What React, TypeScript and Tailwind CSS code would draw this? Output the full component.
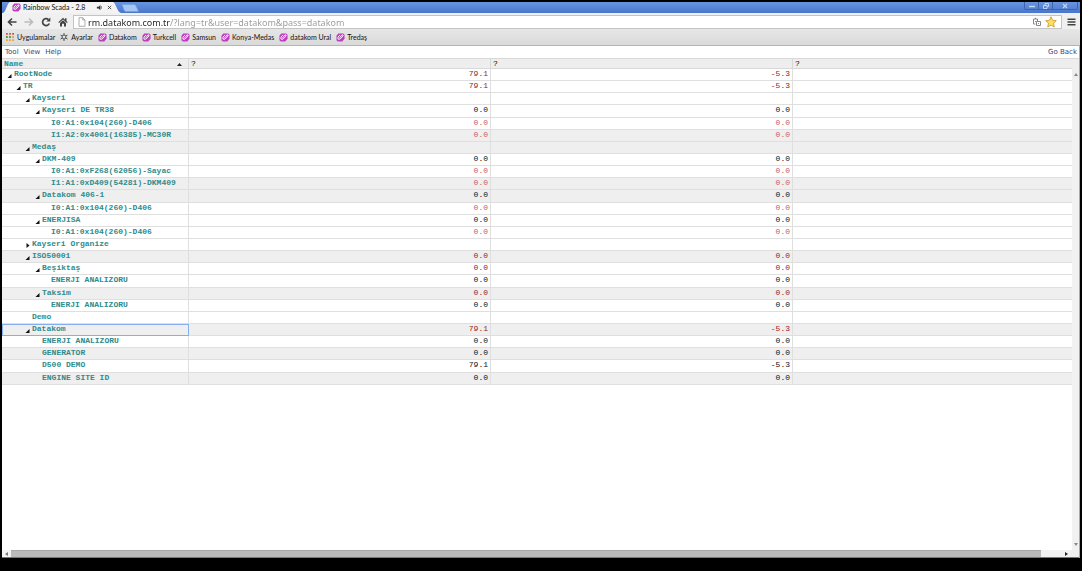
import clsx from "clsx";

type Tone = "dark" | "light" | "plain";

type Row = {
  name: string;
  level: number;
  state?: "open" | "closed";
  values?: [string, string];
  tone?: Tone;
  shaded?: boolean;
  selected?: boolean;
};

const ZERO: [string, string] = ["0.0", "0.0"];
const TOTAL: [string, string] = ["79.1", "-5.3"];

const ROWS: Row[] = [
  { name: "RootNode", level: 0, state: "open", values: TOTAL, tone: "dark" },
  { name: "TR", level: 1, state: "open", values: TOTAL, tone: "dark" },
  { name: "Kayseri", level: 2, state: "open" },
  { name: "Kayseri DE TR38", level: 3, state: "open", values: ZERO },
  { name: "I0:A1:0x104(260)-D406", level: 4, values: ZERO, tone: "light" },
  { name: "I1:A2:0x4001(16385)-MC30R", level: 4, values: ZERO, tone: "light", shaded: true },
  { name: "Medaş", level: 2, state: "open", shaded: true },
  { name: "DKM-409", level: 3, state: "open", values: ZERO },
  { name: "I0:A1:0xF268(62056)-Sayac", level: 4, values: ZERO, tone: "light" },
  { name: "I1:A1:0xD409(54281)-DKM409", level: 4, values: ZERO, tone: "light", shaded: true },
  { name: "Datakom 406-1", level: 3, state: "open", values: ZERO, shaded: true },
  { name: "I0:A1:0x104(260)-D406", level: 4, values: ZERO, tone: "light" },
  { name: "ENERJISA", level: 3, state: "open", values: ZERO },
  { name: "I0:A1:0x104(260)-D406", level: 4, values: ZERO, tone: "light" },
  { name: "Kayseri Organize", level: 2, state: "closed" },
  { name: "ISO50001", level: 2, state: "open", values: ZERO, tone: "dark", shaded: true },
  { name: "Beşiktaş", level: 3, state: "open", values: ZERO, tone: "dark" },
  { name: "ENERJI ANALIZORU", level: 4, values: ZERO },
  { name: "Taksim", level: 3, state: "open", values: ZERO, tone: "dark", shaded: true },
  { name: "ENERJI ANALIZORU", level: 4, values: ZERO },
  { name: "Demo", level: 2 },
  { name: "Datakom", level: 2, state: "open", values: TOTAL, tone: "dark", shaded: true, selected: true },
  { name: "ENERJI ANALIZORU", level: 3, values: ZERO },
  { name: "GENERATOR", level: 3, values: ZERO, shaded: true },
  { name: "D500 DEMO", level: 3, values: TOTAL },
  { name: "ENGINE SITE ID", level: 3, values: ZERO, shaded: true },
];

const INDENT = ["pl-[5px]", "pl-[14px]", "pl-[23px]", "pl-[33px]", "pl-[42px]"];

const TONES: Record<Tone, string> = {
  dark: "text-[#992222]",
  light: "text-[#cf5a5a]",
  plain: "text-[#111111]",
};

const BOOKMARKS = ["Datakom", "Turkcell", "Samsun", "Konya-Medas", "datakom Ural", "Tredaş"];

export default function App() {
  return (
    <div className="flex h-screen flex-col bg-black px-0.5 pt-0.5 pb-[13px] font-[Lato,sans-serif] text-[7px] leading-[9px] text-[#111]">
      <TitleBar />
      <Toolbar />
      <Bookmarks />
      <main className="flex min-h-0 flex-1 flex-col border-r border-[#aaa] bg-white">
        <MenuBar />
        <div className="flex min-h-0 flex-1">
          <div className="min-w-0 flex-1 overflow-hidden">
            <NodeTable />
          </div>
          <VerticalScrollbar />
        </div>
        <HorizontalScrollbar />
      </main>
    </div>
  );
}

function TitleBar() {
  return (
    <header className="flex h-[11px] shrink-0 justify-between bg-linear-to-b from-[#6895df] to-[#4976cb]">
      <div className="flex">
        <div className="relative ml-px flex w-[118px] items-center pr-[9px] pl-[9px]">
          <svg viewBox="0 0 118 11" preserveAspectRatio="none" className="absolute inset-0 size-full" aria-hidden>
            <path d="M0 11 C3 10 4 1 7 0 H110 C113 1 114 10 118 11Z" fill="#f3f3f3" />
          </svg>
          <SiteIcon />
          <span className="relative ml-0.5 flex-1 whitespace-nowrap">Rainbow Scada - 2.8</span>
          <svg viewBox="0 0 8 8" className="relative mr-1 size-[7px]" aria-hidden>
            <path d="M1 3h2l2-2v6L3 5H1z" fill="#333" />
            <path d="M6 2.5v3" stroke="#555" />
          </svg>
          <button aria-label="Close tab" className="relative">
            <svg viewBox="0 0 6 6" className="size-[5px]">
              <path d="M1 1l4 4M5 1L1 5" stroke="#333" />
            </svg>
          </button>
        </div>
        <button aria-label="New tab" className="flex items-center">
          <svg viewBox="0 0 18 8" className="h-2 w-[18px]">
            <path d="M1 .5h12c1 0 1.500 .5 2 1.500l2.500 5.500H5c-1 0-1.500-.5-2-1.500z" fill="#a5c5f2" stroke="#6f9fe0" strokeWidth=".6" />
          </svg>
        </button>
      </div>
      <div className="mr-0.5 flex h-2 rounded-b-xs border border-t-0 border-[#3d63aa]">
        <button aria-label="Minimize" className="grid w-3.5 place-items-center border-r border-[#3d63aa]">
          <svg viewBox="0 0 8 6" className="h-1.5 w-2">
            <path d="M1 3.500h6" stroke="#c5d5f0" strokeWidth="1.500" />
          </svg>
        </button>
        <button aria-label="Restore" className="grid w-3.5 place-items-center border-r border-[#3d63aa]">
          <svg viewBox="0 0 8 6" className="h-1.5 w-2" fill="none" stroke="#c5d5f0">
            <path d="M1.500 2.500h3.500v3H1.500zM3 2.500V.5h3.500v3H5" />
          </svg>
        </button>
        <button aria-label="Close" className="grid w-6 place-items-center">
          <svg viewBox="0 0 6 6" className="size-1.5">
            <path d="M1 1l4 4M5 1L1 5" stroke="#c5d5f0" strokeWidth="1.200" />
          </svg>
        </button>
      </div>
    </header>
  );
}

function Toolbar() {
  return (
    <div className="flex h-4 shrink-0 items-center bg-[#f0f0f0] pt-0.5 pr-1">
      <nav className="flex w-[71px] items-center gap-[7px] pl-[5px]">
        <button aria-label="Back">
          <svg viewBox="0 0 10 10" className="size-2.5" fill="none" stroke="#444" strokeWidth="1.600">
            <path d="M9.500 5H1.500M5 1.500L1.500 5 5 8.500" />
          </svg>
        </button>
        <button aria-label="Forward">
          <svg viewBox="0 0 10 10" className="size-2.5" fill="none" stroke="#bbb" strokeWidth="1.600">
            <path d="M.5 5h8M5 1.500L8.500 5 5 8.500" />
          </svg>
        </button>
        <button aria-label="Reload">
          <svg viewBox="0 0 10 10" className="size-2.5">
            <path d="M8.300 6.500A3.500 3.500 0 1 1 7.500 2.500" fill="none" stroke="#444" strokeWidth="1.700" />
            <path d="M9.300 .6v4H5.300z" fill="#444" />
          </svg>
        </button>
        <button aria-label="Home">
          <svg viewBox="0 0 10 10" className="size-2.5" fill="#444">
            <path d="M5 .8L.3 5.300l.8.800L5 2.400l3.900 3.700.8-.8L8.500 4.100V1.300H7v1.400z" />
            <path d="M2 6l3-2.800L8 6v3.500H6V6.800H4v2.700H2z" />
          </svg>
        </button>
      </nav>
      <div className="flex h-3.5 flex-1 items-center border border-[#c4c4c4] bg-white px-1">
        <svg viewBox="0 0 8 10" className="mr-0.5 h-2.5 w-2" fill="#fff" stroke="#999" strokeWidth=".8" aria-hidden>
          <path d="M1 .7h3.800L7 3v6.300H1zM4.800 .7V3H7" />
        </svg>
        <input
          aria-label="Address"
          defaultValue="rm.datakom.com.tr/?lang=tr&user=datakom&pass=datakom"
          className="h-3 min-w-0 flex-1 bg-[linear-gradient(to_right,#222_82px,#999_82px)] bg-clip-text font-['Noto_Sans'] text-[9px] text-transparent outline-none"
        />
        <svg viewBox="0 0 10 10" className="mr-[3px] size-2.5" fill="none" stroke="#888" aria-hidden>
          <path d="M1.500 2h4v2M1.500 2v5h2M3.500 2V.8M3 4.500h1" />
          <path d="M4.500 4.500h4v4h-4zM6 6.500h1" />
        </svg>
        <button aria-label="Bookmark this page">
          <svg viewBox="0 0 12 12" className="size-3">
            <path d="M6 .8l1.600 3.500 3.700.4-2.800 2.500.8 3.800L6 9.100 2.700 11l.8-3.800L.7 4.700l3.700-.4z" fill="#ffdf5e" stroke="#c99428" strokeWidth=".8" />
          </svg>
        </button>
      </div>
      <button aria-label="Menu" className="ml-[5px]">
        <svg viewBox="0 0 9 8" className="h-2 w-[9px]" stroke="#444" strokeWidth="1.600">
          <path d="M.5 1.200h8M.5 4h8M.5 6.800h8" />
        </svg>
      </button>
    </div>
  );
}

function Bookmarks() {
  return (
    <nav className="flex h-[17px] shrink-0 items-center gap-[5px] border-b border-[#b4b4b4] bg-linear-to-b from-[#e6e6e6] to-[#dadada] pl-1 whitespace-nowrap">
      <a href="#apps" className="flex items-center gap-[3px]">
        <svg viewBox="0 0 9 9" className="size-2" aria-hidden>
          <path d="M0 0h2v2H0zM3.500 0h2v2h-2zM7 0h2v2H7z" fill="#e0473a" />
          <path d="M0 3.500h2v2H0zM3.500 3.500h2v2h-2z" fill="#4d9c4a" />
          <path d="M7 3.500h2v2H7zM0 7h2v2H0zM3.500 7h2v2h-2zM7 7h2v2H7z" fill="#e9a32c" />
        </svg>
        Uygulamalar
      </a>
      <a href="#settings" className="flex items-center gap-[3px]">
        <svg viewBox="0 0 8 8" className="size-2" fill="none" stroke="#555" aria-hidden>
          <circle cx="4" cy="4" r="2" />
          <path d="M4 0v2M4 6v2M.5 2l1.800 1M5.700 5l1.800 1M.5 6l1.800-1M5.700 3l1.800-1" />
        </svg>
        Ayarlar
      </a>
      {BOOKMARKS.map((label) => (
        <a key={label} href="#bookmark" className="flex items-center gap-0.5">
          <SiteIcon />
          {label}
        </a>
      ))}
    </nav>
  );
}

function SiteIcon() {
  return (
    <svg viewBox="0 0 10 10" className="relative size-[9px]" aria-hidden>
      <path d="M2.500 .5h5.500l1.500 1.500v4.500L7 9.500H2L.5 8V3z" fill="#bd3fc0" />
      <path d="M4.500 2.200L2.200 4.500v2.300h2.300L7.800 3.200V2.200H6.500L4 5.500" fill="none" stroke="#fff" strokeWidth="1" />
    </svg>
  );
}

function MenuBar() {
  return (
    <nav className="flex h-3 shrink-0 items-center justify-between pr-0.5 pl-[3px] font-['DejaVu_Sans'] text-[#33487c]">
      <div className="flex gap-[5px]">
        <button>Tool</button>
        <button>View</button>
        <button>Help</button>
      </div>
      <a href="#back">Go Back</a>
    </nav>
  );
}

function NodeTable() {
  const head = "border-y border-r border-[#d8d8d8] p-0 pl-0.5 text-left align-top";
  const cell = "border-r border-b border-[#dfdfdf] p-0 pr-0.5 text-right align-top";
  return (
    <table className="h-[327px] w-full table-fixed border-separate border-spacing-0 font-['Liberation_Mono'] text-[8px] leading-[9px]">
      <thead>
        <tr className="h-[11px] bg-[#eee]">
          <th className={clsx(head, "w-[187px] text-[#2f8c8c]")}>
            <span className="flex items-center justify-between pr-1.5">
              Name
              <svg viewBox="0 0 5 4" className="h-1 w-[5px]" aria-hidden>
                <path d="M0 4L2.500 1 5 4z" fill="#222" />
              </svg>
            </span>
          </th>
          <th className={clsx(head, "w-[302px] font-normal")}>?</th>
          <th className={clsx(head, "w-[302px] font-normal")}>?</th>
          <th className={clsx(head, "border-r-0 font-normal")}>?</th>
        </tr>
      </thead>
      <tbody>
        {ROWS.map((row, i) => {
          const tone = TONES[row.tone ?? "plain"];
          return (
            <tr key={i} className={row.shaded ? "bg-[#efefef]" : "bg-white"}>
              <td
                className={clsx(
                  "border-r border-b border-[#dfdfdf] p-0 align-top font-bold text-[#2f8c8c]",
                  INDENT[row.level],
                  row.selected && "outline -outline-offset-1 outline-[#86aef0]",
                )}
              >
                <span className="flex whitespace-nowrap">
                  <span className="flex w-[7px] items-end">
                    <Arrow state={row.state} />
                  </span>
                  {row.name}
                </span>
              </td>
              <td className={clsx(cell, tone)}>{row.values?.[0]}</td>
              <td className={clsx(cell, tone)}>{row.values?.[1]}</td>
              <td className="border-b border-[#dfdfdf] p-0" />
            </tr>
          );
        })}
      </tbody>
    </table>
  );
}

function Arrow({ state }: { state?: "open" | "closed" }) {
  if (!state) return null;
  return (
    <svg viewBox="0 0 5 5" className="size-[5px]" fill="#111" aria-hidden>
      <path d={state === "open" ? "M4.500 1v4H.5z" : "M1.500 0L4.500 2.500 1.500 5z"} />
    </svg>
  );
}

function VerticalScrollbar() {
  return (
    <div className="flex w-[7px] flex-col items-center justify-between bg-[#f1f1f1]">
      <div className="flex h-5 w-full flex-col items-center justify-between border-t border-[#d8d8d8] bg-[#eee] pb-0.5">
        <span />
        <svg viewBox="0 0 4 3" className="h-[3px] w-1" aria-hidden>
          <path d="M0 3L2 0l2 3z" fill="#888" />
        </svg>
      </div>
      <svg viewBox="0 0 4 3" className="mb-1 h-[3px] w-1" aria-hidden>
        <path d="M0 0l2 3 2-3z" fill="#888" />
      </svg>
    </div>
  );
}

function HorizontalScrollbar() {
  return (
    <div className="flex h-2 shrink-0 items-center border-b border-[#777] bg-[#f1f1f1]">
      <svg viewBox="0 0 3 4" className="mx-[3px] h-1 w-[3px]" aria-hidden>
        <path d="M3 0L0 2l3 2z" fill="#777" />
      </svg>
      <div className="h-full flex-1 border-t border-[#a8a8a8] bg-[#bababa]" />
      <svg viewBox="0 0 3 4" className="mr-[11px] ml-6 h-1 w-[3px]" aria-hidden>
        <path d="M0 0l3 2-3 2z" fill="#222" />
      </svg>
    </div>
  );
}
